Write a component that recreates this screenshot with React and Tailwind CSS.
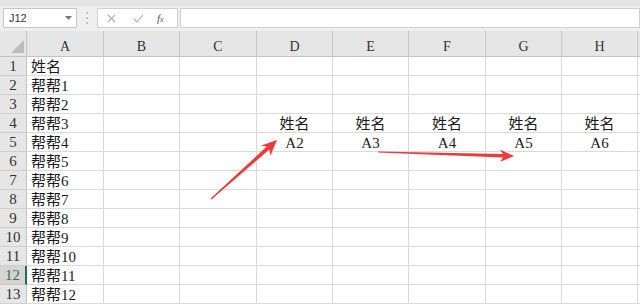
import React from 'react';

const colW = [
  'w-[77px]',
  'w-[76px]',
  'w-[77px]',
  'w-[76px]',
  'w-[76px]',
  'w-[77px]',
  'w-[76px]',
  'w-[76px]',
];
const letters = ['A', 'B', 'C', 'D', 'E', 'F', 'G', 'H'];
const rows = Array.from({ length: 13 }, (_, i) => i + 1);

const cells = {
  '1-0': { t: '姓名' },
  '4-3': { t: '姓名', c: true },
  '4-4': { t: '姓名', c: true },
  '4-5': { t: '姓名', c: true },
  '4-6': { t: '姓名', c: true },
  '4-7': { t: '姓名', c: true },
  '5-3': { t: 'A2', c: true },
  '5-4': { t: 'A3', c: true },
  '5-5': { t: 'A4', c: true },
  '5-6': { t: 'A5', c: true },
  '5-7': { t: 'A6', c: true },
};
for (let i = 2; i <= 13; i++) cells[`${i}-0`] = { t: `帮帮${i - 1}` };

const cellFont = "[font-family:'Liberation_Serif','Noto_Sans_CJK_SC',serif]";

function Toolbar() {
  return (
    <div className="flex h-[31px] flex-col bg-[#efefef]">
      <div className="h-[6px] bg-[#e4e4e4] border-b border-[#dcdcdc]" />
      <div className="flex flex-1 items-start pt-[2px]">
        <div className="ml-[3px] flex h-[20px] w-[74px] items-center justify-between border border-[#c6c6c6] bg-white pl-[5px] pr-[4px]">
          <span className="text-[11px] text-[#333] [font-family:'Liberation_Sans',sans-serif]">J12</span>
          <svg width="7" height="4" viewBox="0 0 7 4">
            <path d="M0 0 L7 0 L3.5 4 Z" fill="#777" />
          </svg>
        </div>
        <div className="ml-[9px] mt-[4px] flex h-[12px] flex-col justify-between">
          <span className="h-[2px] w-[2px] bg-[#c4c4c4]" />
          <span className="h-[2px] w-[2px] bg-[#c4c4c4]" />
          <span className="h-[2px] w-[2px] bg-[#c4c4c4]" />
        </div>
        <div className="ml-[9px] flex h-[20px] w-[81px] items-center border border-[#d0d0d0] bg-white">
          <svg className="ml-[9px]" width="9" height="9" viewBox="0 0 9 9">
            <path d="M1 1 L8 8 M8 1 L1 8" stroke="#b0b0b0" strokeWidth="1.1" />
          </svg>
          <svg className="ml-[17px]" width="11" height="9" viewBox="0 0 11 9">
            <path d="M1 5 L4 8 L10 1" stroke="#b0b0b0" strokeWidth="1.1" fill="none" />
          </svg>
          <span className="ml-[13px] text-[11px] italic text-[#555] [font-family:'Liberation_Serif',serif]">
            f<span className="text-[8px]">x</span>
          </span>
        </div>
        <div className="ml-[2px] h-[20px] flex-1 border border-[#d0d0d0] bg-white" />
      </div>
    </div>
  );
}

function HeaderRow() {
  return (
    <div className="flex h-[26px] bg-[#e6e6e6] border-b border-[#c4c4c4]">
      <div className="relative w-[27px] shrink-0 border-r border-[#c4c4c4]">
        <svg className="absolute bottom-[3px] right-[2px]" width="13" height="13" viewBox="0 0 13 13">
          <path d="M13 0 L13 13 L0 13 Z" fill="#bcbcbc" />
        </svg>
      </div>
      {letters.map((l, i) => (
        <div
          key={l}
          className={`${colW[i]} flex shrink-0 items-end justify-center pb-[2px] text-[14px] leading-none text-[#333] [font-family:'Liberation_Serif',serif] border-r border-[#c8c8c8]`}
        >
          {l}
        </div>
      ))}
      <div className="flex-1" />
    </div>
  );
}

function Grid() {
  return (
    <div className="flex flex-col">
      {rows.map((n) => {
        const sel = n === 12;
        return (
          <div key={n} className="flex h-[19px] shrink-0">
            <div
              className={`flex w-[27px] shrink-0 items-center justify-center border-b text-[15px] leading-none [font-family:'Liberation_Serif',serif] ${
                sel
                  ? 'bg-[#d4d4d4] text-[#3e6a52] border-r-2 border-r-[#217346] border-b-[#c4c4c4]'
                  : 'bg-[#e6e6e6] text-[#333] border-r border-r-[#c4c4c4] border-b-[#d0d0d0]'
              }`}
            >
              {n}
            </div>
            {colW.map((w, c) => {
              const cell = cells[`${n}-${c}`];
              return (
                <div
                  key={c}
                  className={`${w} flex shrink-0 items-end overflow-visible whitespace-nowrap border-r border-b border-[#dadada] text-[15px] leading-none text-[#1a1a1a] ${cellFont} ${
                    cell && cell.c ? 'justify-center' : 'pl-[4px]'
                  }`}
                >
                  {cell ? cell.t : ''}
                </div>
              );
            })}
            <div className="flex-1 border-b border-[#dadada]" />
          </div>
        );
      })}
    </div>
  );
}

function Arrows() {
  return (
    <svg className="pointer-events-none absolute left-0 top-0" width="640" height="305" viewBox="0 0 640 305">
      <polygon
        points="211.4,199.5 269.3,149.5 270.4,155.8 277,140 260.8,145.8 266.7,146.5 210.6,198.5"
        fill="#ee3a3a"
      />
      <polygon
        points="378,152.6 503,157.6 500.2,161.8 514,156 499.8,149.4 503,154 378,151.6"
        fill="#ee3a3a"
      />
    </svg>
  );
}

export default function App() {
  return (
    <div className="relative h-[305px] w-[640px] overflow-hidden bg-white">
      <Toolbar />
      <HeaderRow />
      <Grid />
      <Arrows />
    </div>
  );
}
